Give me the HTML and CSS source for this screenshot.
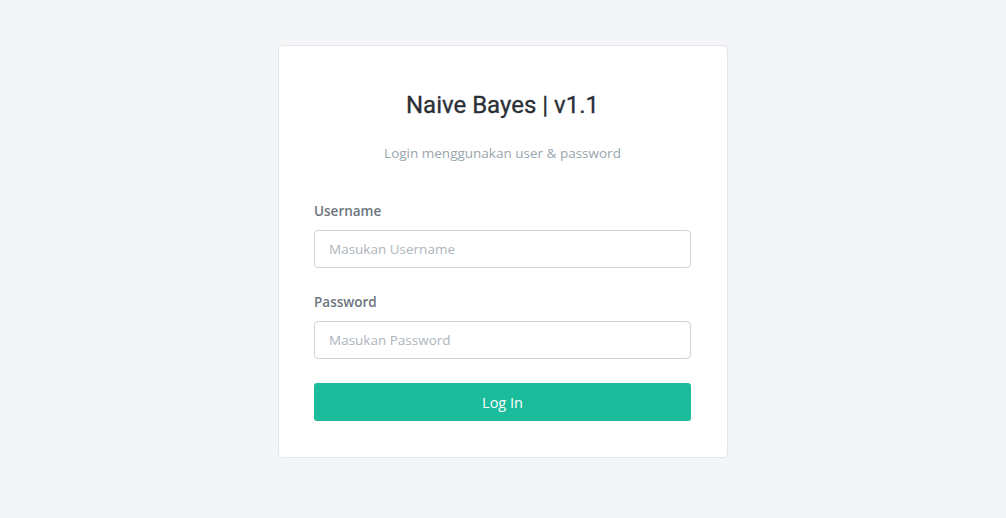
FILE: index.html
```html
<!DOCTYPE html>
<html lang="id">
<head>
<meta charset="utf-8">
<title>Naive Bayes | v1.1</title>
<link rel="stylesheet" href="styles.css">
</head>
<body>
<main class="page">
  <section class="card">
    <h1 class="title">Naive Bayes | v1.1</h1>
    <p class="subtitle">Login menggunakan user &amp; password</p>
    <form class="form">
      <div class="field">
        <label class="label" for="username">Username</label>
        <input class="input" id="username" type="text" placeholder="Masukan Username">
      </div>
      <div class="field">
        <label class="label" for="password">Password</label>
        <input class="input" id="password" type="password" placeholder="Masukan Password">
      </div>
      <button class="btn" type="button">Log In</button>
    </form>
  </section>
</main>
</body>
</html>
```

FILE: styles.css
```css
* { box-sizing: border-box; }
html, body { margin: 0; padding: 0; }
body {
  background: #f4f5f7;
  font-family: "Open Sans", "Noto Sans", sans-serif;
  font-size: 13.5px;
  color: #6c757d;
}
.page {
  display: flex;
  justify-content: center;
  padding-top: 45px;
}
.card {
  width: 450px;
  background: #ffffff;
  border: 1px solid #e3e6ea;
  border-radius: 4px;
  padding: 45px 36px 36px 35px;
}
.title {
  margin: 0;
  text-align: center;
  font-family: Roboto, "Liberation Sans", sans-serif;
  font-weight: 400;
  font-size: 24px;
  line-height: 29px;
  color: #2a2f36;
  -webkit-text-stroke: 0.3px #2a2f36;
}
.subtitle {
  margin: 23px 0 0;
  text-align: center;
  font-size: 13.5px;
  line-height: 21px;
  color: #98a6ad;
}
.form {
  margin-top: 37px;
  display: flex;
  flex-direction: column;
}
.field {
  display: flex;
  flex-direction: column;
  gap: 8px;
  margin-bottom: 24px;
}
.label {
  font-weight: 600;
  font-size: 13.5px;
  line-height: 21px;
  color: #6c757d;
}
.input {
  height: 38px;
  width: 100%;
  border: 1px solid #ced4da;
  border-radius: 4px;
  padding: 0 14px;
  font-family: inherit;
  font-size: 13.5px;
  color: #495057;
  background: #fff;
  outline: none;
}
.input::placeholder { color: #adb5bd; }
.btn {
  height: 38px;
  width: 100%;
  border: none;
  border-radius: 3px;
  background: #1abc9c;
  color: #ffffff;
  font-family: inherit;
  font-size: 14.5px;
  cursor: pointer;
}
```
